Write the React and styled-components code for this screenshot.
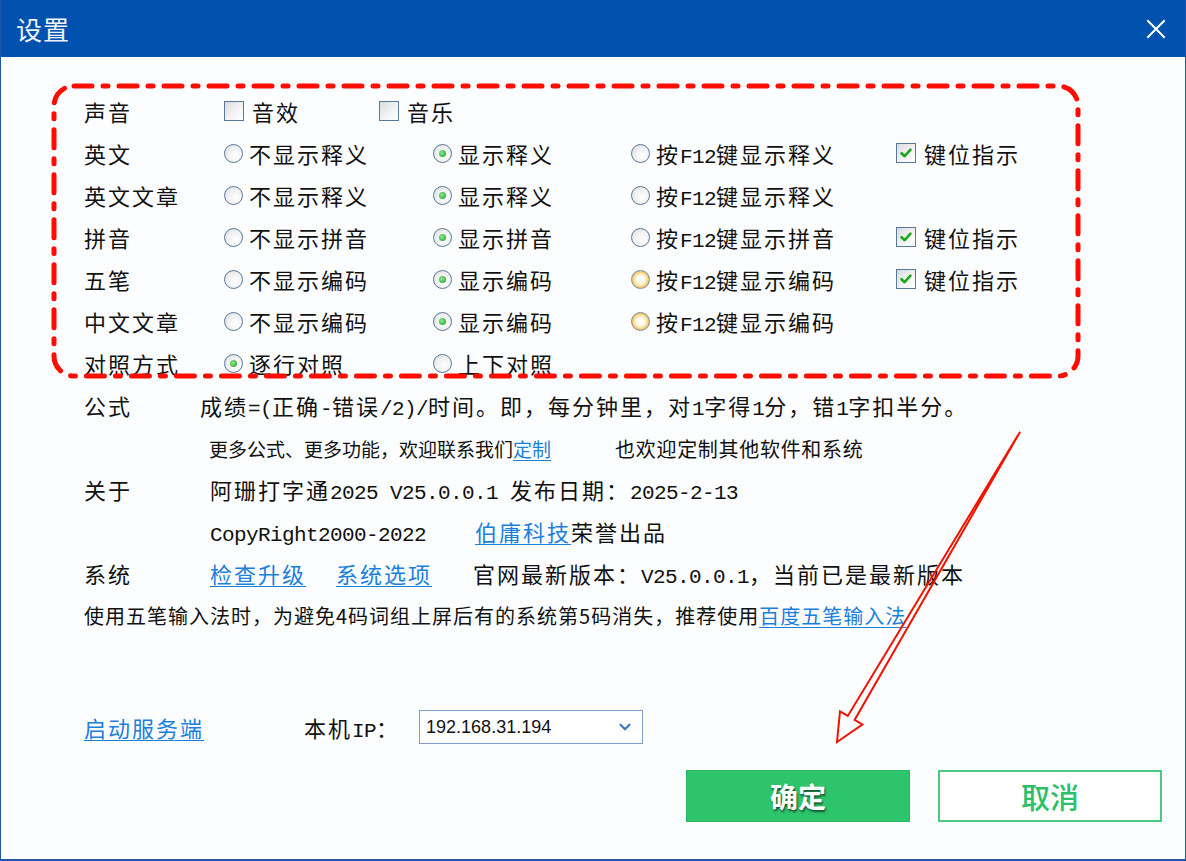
import React from "react";
import styled, { createGlobalStyle, css } from "styled-components";
import { ChevronDown } from "lucide-react";

const CJK = `"Noto Sans CJK SC", "Noto Sans", sans-serif`;
const MONO = `"Liberation Mono", "Noto Sans CJK SC", monospace`;

const GlobalStyle = createGlobalStyle`
  html, body { margin: 0; padding: 0; background: #fff; }
  #root { width: 1186px; height: 861px; }
`;

const Window = styled.div`
  position: relative;
  width: 1186px;
  height: 861px;
  box-sizing: border-box;
  border: 1px solid #1f56a6;
  border-top: none;
  border-bottom-width: 2px;
  display: flex;
  flex-direction: column;
  background: #fcfdff;
  font-family: ${CJK};
  color: #111;
  overflow: hidden;
`;

const TitleBar = styled.div`
  height: 57px;
  flex: none;
  box-sizing: border-box;
  background: #0152ae;
  display: flex;
  align-items: center;
  justify-content: space-between;
  padding: 0 19px 0 15px;
`;

const Title = styled.div`
  color: #eef3fa;
  font-size: 26px;
  letter-spacing: 1px;
`;

const CloseIcon = styled.svg`
  width: 20px;
  height: 20px;
  display: block;
`;

const Body = styled.div`
  flex: 1;
  display: flex;
  flex-direction: column;
  padding: 33px 23px 0 83px;
`;

const OptionsGrid = styled.div`
  display: grid;
  grid-template-columns: 140px 209px 198px 265px 1fr;
  grid-auto-rows: 42px;
  align-items: center;
  font-size: 22px;
  letter-spacing: 2px;
  white-space: nowrap;
`;

const GroupCell = styled.div`
  grid-column: 2 / -1;
  display: flex;
  align-items: center;
`;

const Option = styled.span`
  display: inline-flex;
  align-items: center;
  gap: ${(p) => (p.$box ? "8px" : "6px")};
  width: ${(p) => p.$w || "auto"};
`;

const Radio = styled.span`
  position: relative;
  flex: none;
  width: 19px;
  height: 19px;
  box-sizing: border-box;
  border-radius: 50%;
  border: 1.5px solid #56799e;
  background: radial-gradient(circle at 62% 62%, #ffffff 0%, #efefef 55%, #d4d6d8 100%);
  ${(p) =>
    p.$checked &&
    css`
      &::after {
        content: "";
        position: absolute;
        left: 50%;
        top: 50%;
        width: 7px;
        height: 7px;
        margin: -3.5px 0 0 -3.5px;
        border-radius: 50%;
        background: radial-gradient(circle at 40% 40%, #8fe88f, #149c1f);
      }
    `}
  ${(p) =>
    p.$hot &&
    css`
      border: 1px solid #7890a8;
      background: radial-gradient(circle, #ffffff 0%, #fffdf5 30%, #fbe3a0 52%, #eeb243 78%, #d99a2c 100%);
    `}
`;

const Box = styled.span`
  flex: none;
  width: 20px;
  height: 20px;
  box-sizing: border-box;
  border: 1px solid #56799e;
  background: linear-gradient(135deg, #d9dadc 0%, #f3f3f3 55%, #ffffff 100%);
  display: flex;
  align-items: center;
  justify-content: center;
`;

const M = styled.span`
  font-family: ${MONO};
  font-size: 21px;
  letter-spacing: -0.6px;
  white-space: pre;
`;

const T = ({ children }) =>
  String(children)
    .split(/([\x21-\x7e ]+)/)
    .map((s, i) => (i % 2 ? <M key={i}>{s}</M> : <React.Fragment key={i}>{s}</React.Fragment>));

const InfoRow = styled.div`
  display: flex;
  align-items: center;
  height: 42px;
  font-size: 22px;
  letter-spacing: 2px;
  white-space: nowrap;
`;

const InfoLabel = styled.span`
  flex: none;
  width: 116px;
`;

const Content = styled.div`
  padding-left: ${(p) => p.$indent || "0"};
`;

const Piece = styled.span`
  margin-left: ${(p) => p.$ml || "0"};
`;

const Small = styled.span`
  font-size: ${(p) => p.$size || "19px"};
  letter-spacing: ${(p) => p.$ls || "0"};
  margin-left: ${(p) => p.$ml || "0"};
`;

const Link = styled.span`
  color: #1b7fdc;
  text-decoration: underline;
  text-underline-offset: 3px;
  text-decoration-thickness: 1px;
  margin-left: ${(p) => p.$ml || "0"};
`;

const ServerRow = styled.div`
  margin-top: 74px;
  height: 34px;
  display: flex;
  align-items: center;
  font-size: 22px;
  letter-spacing: 2px;
  white-space: nowrap;
`;

const IpLabel = styled.span`
  margin-left: 100px;
  margin-right: 19px;
`;

const Select = styled.div`
  width: 224px;
  height: 34px;
  box-sizing: border-box;
  border: 1px solid #7e9fca;
  background: #fff;
  display: flex;
  align-items: center;
  justify-content: space-between;
  padding: 0 8px 0 6px;
  font-family: "Liberation Sans", Arial, sans-serif;
  font-size: 18px;
  letter-spacing: 0;
  color: #111;
`;

const ButtonRow = styled.div`
  margin-top: 26px;
  display: flex;
  justify-content: flex-end;
  gap: 28px;
`;

const Button = styled.div`
  width: 224px;
  height: 52px;
  box-sizing: border-box;
  display: flex;
  align-items: center;
  justify-content: center;
  font-size: 28px;
  ${(p) =>
    p.$primary
      ? css`
          background: #2dc46c;
          border: 1px solid #28b863;
          color: #fff;
          font-weight: 700;
          text-shadow: 1px 2px 2px rgba(0, 0, 0, 0.55);
        `
      : css`
          background: #fff;
          border: 2px solid #4cc981;
          color: #2dbf69;
          font-weight: 500;
          font-size: 29px;
        `}
`;

const Overlay = styled.svg`
  position: absolute;
  left: -1px;
  top: 0;
  width: 1186px;
  height: 861px;
  pointer-events: none;
`;

const Check = () => (
  <svg width="14" height="14" viewBox="0 0 14 14">
    <path d="M2.5 7.2 L5.6 10.2 L11.5 3.6" fill="none" stroke="#1da81d" strokeWidth="2.6" strokeLinecap="round" strokeLinejoin="round" />
  </svg>
);

const RadioOpt = ({ checked, hot, children }) => (
  <Option>
    <Radio $checked={checked} $hot={hot} />
    <span><T>{children}</T></span>
  </Option>
);

const BoxOpt = ({ checked, children, w }) => (
  <Option $box $w={w}>
    <Box>{checked && <Check />}</Box>
    <span>{children}</span>
  </Option>
);

const rows = [
  { label: "英文", a: "不显示释义", b: "显示释义", c: "按F12键显示释义", d: true },
  { label: "英文文章", a: "不显示释义", b: "显示释义", c: "按F12键显示释义" },
  { label: "拼音", a: "不显示拼音", b: "显示拼音", c: "按F12键显示拼音", d: true },
  { label: "五笔", a: "不显示编码", b: "显示编码", c: "按F12键显示编码", d: true, hot: true },
  { label: "中文文章", a: "不显示编码", b: "显示编码", c: "按F12键显示编码", hot: true },
];

export default function App() {
  return (
    <>
      <GlobalStyle />
      <Window>
        <TitleBar>
          <Title>设置</Title>
          <CloseIcon viewBox="0 0 20 20">
            <path d="M2 2 L18 18 M18 2 L2 18" stroke="#ffffff" strokeWidth="2" strokeLinecap="square" />
          </CloseIcon>
        </TitleBar>
        <Body>
          <OptionsGrid>
            <span>声音</span>
            <GroupCell>
              <BoxOpt w="155px">音效</BoxOpt>
              <BoxOpt>音乐</BoxOpt>
            </GroupCell>
            {rows.map((r) => (
              <React.Fragment key={r.label}>
                <span>{r.label}</span>
                <RadioOpt>{r.a}</RadioOpt>
                <RadioOpt checked>{r.b}</RadioOpt>
                <RadioOpt hot={r.hot}>{r.c}</RadioOpt>
                {r.d ? <BoxOpt checked>键位指示</BoxOpt> : <span />}
              </React.Fragment>
            ))}
            <span>对照方式</span>
            <RadioOpt checked>逐行对照</RadioOpt>
            <RadioOpt>上下对照</RadioOpt>
          </OptionsGrid>

          <InfoRow>
            <InfoLabel>公式</InfoLabel>
            <Content>
              <T>成绩=(正确-错误/2)/时间。即，每分钟里，对1字得1分，错1字扣半分。</T>
            </Content>
          </InfoRow>
          <InfoRow>
            <InfoLabel />
            <Content $indent="9px">
              <Small>更多公式、更多功能，欢迎联系我们<Link>定制</Link></Small>
              <Small $size="20px" $ls="0.7px" $ml="64px">也欢迎定制其他软件和系统</Small>
            </Content>
          </InfoRow>
          <InfoRow>
            <InfoLabel>关于</InfoLabel>
            <Content $indent="10px">
              <T>阿珊打字通2025 V25.0.0.1 发布日期：2025-2-13</T>
            </Content>
          </InfoRow>
          <InfoRow>
            <InfoLabel />
            <Content $indent="10px">
              <M>CopyRight2000-2022</M>
              <Link $ml="49px">伯庸科技</Link>
              <Piece>荣誉出品</Piece>
            </Content>
          </InfoRow>
          <InfoRow>
            <InfoLabel>系统</InfoLabel>
            <Content $indent="10px">
              <Link>检查升级</Link>
              <Link $ml="30px">系统选项</Link>
              <Piece $ml="41px"><T>官网最新版本：V25.0.0.1，当前已是最新版本</T></Piece>
            </Content>
          </InfoRow>
          <InfoRow>
            <Small $size="20px" $ls="1px">
              使用五笔输入法时，为避免4码词组上屏后有的系统第5码消失，推荐使用<Link>百度五笔输入法</Link>
            </Small>
          </InfoRow>

          <ServerRow>
            <Link>启动服务端</Link>
            <IpLabel><T>本机IP：</T></IpLabel>
            <Select>
              <span>192.168.31.194</span>
              <ChevronDown size={18} strokeWidth={3} color="#3b78c6" />
            </Select>
          </ServerRow>

          <ButtonRow>
            <Button $primary>确定</Button>
            <Button>取消</Button>
          </ButtonRow>
        </Body>

        <Overlay viewBox="0 0 1186 861">
          <rect
            x="54"
            y="86"
            width="1024"
            height="290"
            rx="20"
            ry="20"
            fill="none"
            stroke="#ff0d00"
            strokeWidth="5"
            strokeDasharray="18 11 5 11"
            strokeLinecap="round"
          />
          <polygon
            points="1020,432 854.6,719.9 862.4,724.5 837,742 840,711.3 847.8,715.9"
            fill="none"
            stroke="#f01400"
            strokeWidth="2"
            strokeLinejoin="miter"
          />
        </Overlay>
      </Window>
    </>
  );
}
